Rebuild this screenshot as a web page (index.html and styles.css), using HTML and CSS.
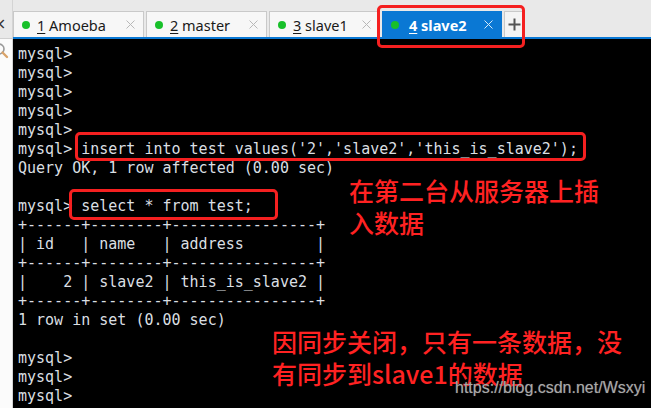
FILE: index.html
```html
<!DOCTYPE html>
<html>
<head>
<meta charset="utf-8">
<link rel="stylesheet" href="styles.css">
</head>
<body>
<div class="app">
  <aside class="side">
    <div class="side-top"><span class="side-x">×</span></div>
    <div class="side-body">
      <svg class="mag" width="20" height="20" viewBox="0 0 20 20"><circle cx="6" cy="7" r="5" fill="none" stroke="#9a9a9a" stroke-width="1.6"/><line x1="9.5" y1="10.5" x2="14" y2="15" stroke="#d9a36a" stroke-width="2.4" stroke-linecap="round"/></svg>
    </div>
  </aside>
  <main class="main">
    <nav class="tabbar">
      <div class="tab t1"><span class="dot"></span><span class="label"><u>1</u> Amoeba</span><svg class="close" width="9" height="9" viewBox="0 0 9 9"><path d="M0.5 0.5L8.5 8.5M8.5 0.5L0.5 8.5" stroke="#b8b8b8" stroke-width="1"/></svg></div>
      <div class="tab t2"><span class="dot"></span><span class="label"><u>2</u> master</span><svg class="close" width="9" height="9" viewBox="0 0 9 9"><path d="M0.5 0.5L8.5 8.5M8.5 0.5L0.5 8.5" stroke="#b8b8b8" stroke-width="1"/></svg></div>
      <div class="tab t3"><span class="dot"></span><span class="label"><u>3</u> slave1</span><svg class="close" width="9" height="9" viewBox="0 0 9 9"><path d="M0.5 0.5L8.5 8.5M8.5 0.5L0.5 8.5" stroke="#b8b8b8" stroke-width="1"/></svg></div>
      <div class="tab t4 active"><span class="dot"></span><span class="label"><u>4</u> slave2</span><svg class="close" width="9" height="9" viewBox="0 0 9 9"><path d="M0.5 0.5L8.5 8.5M8.5 0.5L0.5 8.5" stroke="#d6e9f8" stroke-width="1"/></svg></div>
      <div class="tab plus"><svg width="13" height="13" viewBox="0 0 13 13"><path d="M6.5 0.5V12.5M0.5 6.5H12.5" stroke="#555" stroke-width="2"/></svg></div>
    </nav>
    <div class="blueline"></div>
    <pre class="term">mysql&gt;
mysql&gt;
mysql&gt;
mysql&gt;
mysql&gt;
mysql&gt; insert into test values('2','slave2','this_is_slave2');
Query OK, 1 row affected (0.00 sec)

mysql&gt; select * from test;
+------+--------+----------------+
| id   | name   | address        |
+------+--------+----------------+
|    2 | slave2 | this_is_slave2 |
+------+--------+----------------+
1 row in set (0.00 sec)

mysql&gt;
mysql&gt;
mysql&gt;</pre>
  </main>
  <div class="box box-tab"></div>
  <div class="box box-insert"></div>
  <div class="box box-select"></div>
  <div class="note note1">在第二台从服务器上插<br>入数据</div>
  <div class="note note2">因同步关闭，只有一条数据，没<br>有同步到slave1的数据</div>
  <div class="watermark">https://blog.csdn.net/Wsxyi</div>
</div>
</body>
</html>
```
FILE: styles.css
```css
html, body {
  margin: 0;
  padding: 0;
  width: 651px;
  height: 408px;
  overflow: hidden;
  background: #000;
}
.app {
  position: relative;
  display: flex;
  width: 651px;
  height: 408px;
  overflow: hidden;
}
.side {
  width: 12px;
  flex: none;
  display: flex;
  flex-direction: column;
  border-right: 1px solid #d4d4d4;
  overflow: hidden;
}
.side-top {
  height: 38px;
  background: #e9e9e9;
  border-bottom: 1px solid #d0d0d0;
  position: relative;
  overflow: hidden;
}
.side-x {
  position: absolute;
  left: -7px;
  top: 14px;
  font: 16px "DejaVu Sans", sans-serif;
  color: #333;
}
.side-body {
  flex: 1;
  background: #fbfbfb;
  position: relative;
  overflow: hidden;
}
.mag {
  position: absolute;
  left: -7px;
  top: 3px;
}
.main {
  flex: 1;
  display: flex;
  flex-direction: column;
  min-width: 0;
}
.tabbar {
  height: 37px;
  background: #e9e9e9;
  display: flex;
  align-items: flex-end;
  gap: 2px;
  box-sizing: border-box;
}
.tab {
  height: 26px;
  box-sizing: border-box;
  background: #f7f7f7;
  border: 1px solid #c9c9c9;
  border-bottom: none;
  display: flex;
  align-items: center;
  padding: 0 0 0 8px;
  font: 14.5px "Noto Sans", "Open Sans", sans-serif;
  color: #1a1a1a;
  position: relative;
}
.tab u {
  text-decoration-thickness: 1px;
  text-underline-offset: 2px;
}
.dot {
  width: 8px;
  height: 8px;
  border-radius: 50%;
  background: #18c02a;
  margin-right: 7px;
  flex: none;
}
.label {
  flex: 1;
  white-space: nowrap;
  line-height: 20px;
}
.close {
  flex: none;
  margin-right: 8px;
}
.t1 { width: 131px; }
.t2 { width: 121px; }
.t3 { width: 111px; }
.t4 { width: 120px; }
.active {
  background: #0a78d4;
  border-color: #0a78d4;
  color: #fff;
  font-weight: bold;
}
.active .label { padding-left: 3px; }
.plus {
  width: 21px;
  padding: 0;
  justify-content: center;
  background: #f4f4f4;
}
.blueline {
  height: 2px;
  background: #0a78d4;
}
.term {
  flex: 1;
  margin: 0;
  padding: 6px 0 0 5px;
  background: #000;
  color: #dadfe2;
  font: 15px/19px "DejaVu Sans Mono", monospace;
  white-space: pre;
}
.box {
  position: absolute;
  border: 3px solid #f52020;
  border-radius: 5px;
  box-sizing: border-box;
}
.box-tab { left: 377px; top: 5px; width: 148px; height: 43px; }
.box-insert { left: 75px; top: 132px; width: 511px; height: 29px; }
.box-select { left: 69px; top: 189px; width: 209px; height: 31px; }
.note {
  position: absolute;
  color: #ff2222;
  font: 500 25px/32px "Noto Sans CJK SC", "Noto Sans", sans-serif;
  white-space: nowrap;
}
.note1 { left: 349px; top: 174px; }
.note2 { left: 272px; top: 325px; }
.watermark {
  position: absolute;
  left: 455px;
  top: 379px;
  font: 16px "Liberation Sans", Arial, sans-serif;
  color: #a8a8a8;
  text-shadow: 0 0 1px #555;
}
```
